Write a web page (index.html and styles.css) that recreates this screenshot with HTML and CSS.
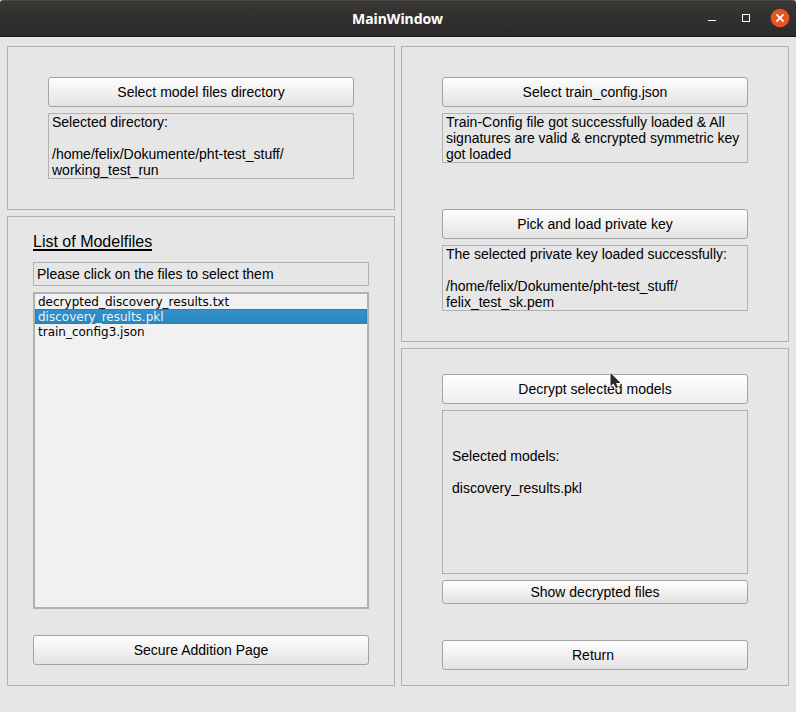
FILE: index.html
```html
<!DOCTYPE html>
<html lang="en">
<head>
<meta charset="utf-8">
<title>MainWindow</title>
<link rel="stylesheet" href="styles.css">
</head>
<body>
<div class="window">
  <header class="titlebar">
    <h1 class="title"><span>MainWindow</span></h1>
    <svg class="controls" width="88" height="20" viewBox="0 0 88 20">
      <path d="M8 11.5h8" stroke="#fff" fill="none"/>
      <rect x="42.5" y="5.5" width="7" height="7" stroke="#fff" fill="none"/>
      <circle cx="80" cy="9" r="9.3" fill="#e95420"/>
      <path d="M76.4 5.4l7.2 7.2M83.6 5.4l-7.2 7.2" stroke="#fff" stroke-width="1.8" fill="none"/>
    </svg>
  </header>
  <main class="content">
    <div class="column">
      <section class="panel directory">
        <button class="btn"><span>Select model files directory</span></button>
        <div class="message path">Selected directory:<br><br>/home/felix/Dokumente/pht-test_stuff/<br>working_test_run</div>
      </section>
      <section class="panel models">
        <h2 class="heading"><span>List of Modelfiles</span></h2>
        <div class="message hint">Please click on the files to select them</div>
        <ul class="files">
          <li>decrypted_discovery_results.txt</li>
          <li class="selected">discovery_results.pkl</li>
          <li>train_config3.json</li>
        </ul>
        <button class="btn addition"><span>Secure Addition Page</span></button>
      </section>
    </div>
    <div class="column">
      <section class="panel keys">
        <button class="btn"><span>Select train_config.json</span></button>
        <div class="message config">Train-Config file got successfully loaded &amp; All<br>signatures are valid &amp; encrypted symmetric key<br>got loaded</div>
        <button class="btn pick"><span>Pick and load private key</span></button>
        <div class="message path">The selected private key loaded successfully:<br><br>/home/felix/Dokumente/pht-test_stuff/<br>felix_test_sk.pem</div>
      </section>
      <section class="panel decrypt">
        <button class="btn hover"><span>Decrypt selected models</span>
          <svg class="pointer" width="15" height="21" viewBox="0 0 15 21">
            <path d="M1 .8v15.4l3.3-3 2.6 4.6 2.8-1.4-2.1-3.9h5z" fill="#2b2b2b" stroke="#fff" stroke-width="1"/>
          </svg>
        </button>
        <div class="message result">Selected models:<br><br>discovery_results.pkl</div>
        <button class="btn show"><span>Show decrypted files</span></button>
        <button class="btn return"><span>Return</span></button>
      </section>
    </div>
  </main>
</div>
</body>
</html>
```
FILE: styles.css
```css
* { box-sizing: border-box; }
body { margin: 0; background: #e6e6e6; color: #000; font: 14px/16px "Liberation Sans", Arial, sans-serif; }
.window { width: 796px; height: 712px; overflow: hidden; }
.titlebar {
  display: grid;
  grid-template-columns: 96px 1fr 96px;
  height: 37px;
  padding-top: 9px;
  background: linear-gradient(#383734, #2c2a2b);
  border-top: 1px solid #4b4a46;
  border-bottom: 1px solid #1c1a1b;
  border-radius: 3px 3px 0 0;
}
.title { grid-column: 2; margin: 0 1px 0 0; color: #fff; text-align: center; font: bold 14px/18px "Noto Sans", sans-serif; }
.controls { display: block; justify-self: end; margin-right: 8px; margin-top: -1px; overflow: visible; }
.content { display: flex; gap: 6px; padding: 9px 7px 0; }
.column { display: flex; flex-direction: column; gap: 6px; width: 388px; }
.panel { display: flex; flex-direction: column; border: 1px solid #b1b1b1; padding: 30px 40px 0; }
.directory { height: 164px; }
.models { height: 470px; padding: 16px 25px 0; }
.keys { height: 296px; }
.decrypt { height: 338px; padding-top: 25px; }
.btn {
  position: relative;
  flex: none;
  height: 30px;
  padding: 0;
  border: 1px solid #a3a3a3;
  border-radius: 3px;
  background: linear-gradient(#fefefe, #e3e3e3);
  color: #000;
  font: inherit;
}
.hover { background: linear-gradient(#ffffff, #ededed); }
.message { flex: none; margin-top: 6px; border: 1px solid #b1b1b1; padding: 0 3px; white-space: nowrap; }
.path { height: 66px; }
.config { height: 50px; }
.pick { margin-top: 46px; }
.heading { margin: 0; height: 23px; font-size: 16px; line-height: 18px; font-weight: normal; }
.heading span { display: inline-block; height: 18px; border-bottom: 2px solid #000; }
.hint { height: 24px; padding-top: 3px; }
.files {
  flex: none;
  height: 317px;
  margin: 6px 0 0;
  padding: 0;
  border: 2px solid #b1b1b1;
  background: #f1f1f1;
  list-style: none;
  font: 12px/17px "DejaVu Sans", sans-serif;
}
.files li { height: 15px; padding-left: 3px; }
.files .selected { background: linear-gradient(#3191cc, #2d86bd); border: 1px solid #2a7fb4; padding-left: 2px; line-height: 15px; color: #e8f3fa; }
.addition { margin-top: 26px; }
.result { height: 164px; padding: 37px 9px 0; }
.show { height: 24px; margin-top: 6px; }
.return { margin-top: 36px; padding-right: 4px; }
.pointer { position: absolute; left: 166px; top: -4px; }
```
